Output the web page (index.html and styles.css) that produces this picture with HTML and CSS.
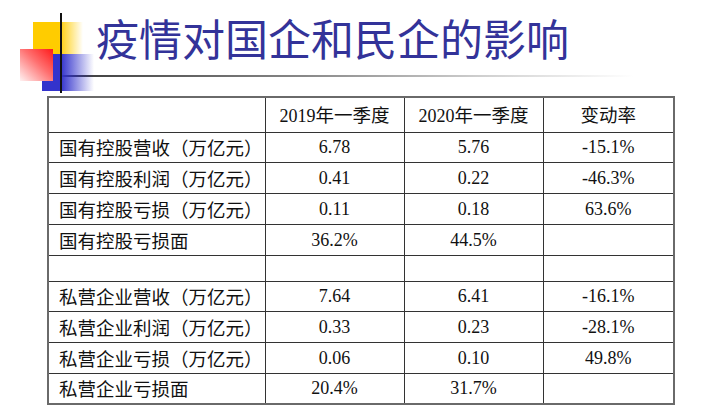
FILE: index.html
```html
<!DOCTYPE html>
<html lang="zh-CN">
<head>
<meta charset="utf-8">
<title>疫情对国企和民企的影响</title>
<link rel="stylesheet" href="styles.css">
</head>
<body>
<div class="slide">
  <header class="head">
    <div class="logo" aria-hidden="true">
      <span class="sq yellow"></span>
      <span class="sq blue"></span>
      <span class="sq red"></span>
      <span class="vline"></span>
    </div>
    <h1 class="title">疫情对国企和民企的影响</h1>
    <div class="rule"></div>
  </header>
  <table class="data">
    <colgroup>
      <col class="c1"><col class="c2"><col class="c3"><col class="c4">
    </colgroup>
    <tr class="hrow"><td></td><td>2019<span class="zh">年一季度</span></td><td>2020<span class="zh">年一季度</span></td><td><span class="zh">变动率</span></td></tr>
    <tr><td class="lbl">国有控股营收（万亿元）</td><td>6.78</td><td>5.76</td><td>-15.1%</td></tr>
    <tr><td class="lbl">国有控股利润（万亿元）</td><td>0.41</td><td>0.22</td><td>-46.3%</td></tr>
    <tr><td class="lbl">国有控股亏损（万亿元）</td><td>0.11</td><td>0.18</td><td>63.6%</td></tr>
    <tr><td class="lbl">国有控股亏损面</td><td>36.2%</td><td>44.5%</td><td></td></tr>
    <tr class="blank"><td></td><td></td><td></td><td></td></tr>
    <tr><td class="lbl">私营企业营收（万亿元）</td><td>7.64</td><td>6.41</td><td>-16.1%</td></tr>
    <tr><td class="lbl">私营企业利润（万亿元）</td><td>0.33</td><td>0.23</td><td>-28.1%</td></tr>
    <tr><td class="lbl">私营企业亏损（万亿元）</td><td>0.06</td><td>0.10</td><td>49.8%</td></tr>
    <tr><td class="lbl">私营企业亏损面</td><td>20.4%</td><td>31.7%</td><td></td></tr>
  </table>
</div>
</body>
</html>
```
FILE: styles.css
```css
html, body {
  margin: 0;
  padding: 0;
  background: #fff;
}
.slide {
  width: 715px;
  height: 417px;
  position: relative;
  overflow: hidden;
  background: #fff;
}
.head {
  position: relative;
  padding-top: 11px;
  height: 85px;
  box-sizing: border-box;
}
.title {
  margin: 0 0 0 96px;
  font-family: "Noto Sans CJK SC", "Noto Sans", sans-serif;
  font-weight: 400;
  font-size: 43px;
  line-height: 52px;
  color: #333399;
}
.rule {
  margin: 12px 0 0 34px;
  width: 600px;
  height: 2px;
  background: linear-gradient(to right, #111 0%, #444 10%, #888 45%, #d0d0d0 75%, rgba(255,255,255,0) 100%);
}
.logo {
  position: absolute;
  left: 0;
  top: 0;
  width: 100px;
  height: 96px;
}
.sq {
  position: absolute;
  display: block;
}
.yellow {
  left: 33px;
  top: 22px;
  width: 50px;
  height: 32px;
  background: linear-gradient(to right, #ffcc00 0%, #ffcc00 52%, rgba(255, 204, 0, 0) 100%);
}
.blue {
  left: 42px;
  top: 54px;
  width: 52px;
  height: 37px;
  background: linear-gradient(to right, #3333cc 0%, #3333cc 36%, rgba(51, 51, 204, 0) 100%);
}
.red {
  left: 20px;
  top: 49px;
  width: 33px;
  height: 32px;
  background: linear-gradient(to bottom left, #ff1a1a 0%, #ff7070 45%, #fff2f2 100%);
}
.vline {
  position: absolute;
  left: 60px;
  top: 13px;
  width: 2px;
  height: 80px;
  background: #111;
}
.data {
  margin: 11px 0 0 47px;
  width: 626px;
  border-collapse: collapse;
  table-layout: fixed;
  border: 2px solid #6a6a6a;
  font-family: "Liberation Serif", "Noto Sans CJK SC", serif;
  font-size: 18px;
  color: #111;
}
.c1 { width: 217px; }
.c2 { width: 139px; }
.c3 { width: 139px; }
.c4 { width: 131px; }
.data tr {
  height: 30.75px;
}
.data tr.hrow {
  height: 35px;
}
.data tr.blank {
  height: 26px;
}
.data td {
  border: 1px solid #333;
  text-align: center;
  padding: 0;
  line-height: 20px;
  white-space: nowrap;
}
.data td.lbl {
  text-align: left;
  padding-left: 10px;
  font-family: "Noto Sans CJK SC", sans-serif;
  font-size: 18.5px;
}
.zh {
  font-family: "Noto Sans CJK SC", sans-serif;
  font-size: 18.5px;
}
```
